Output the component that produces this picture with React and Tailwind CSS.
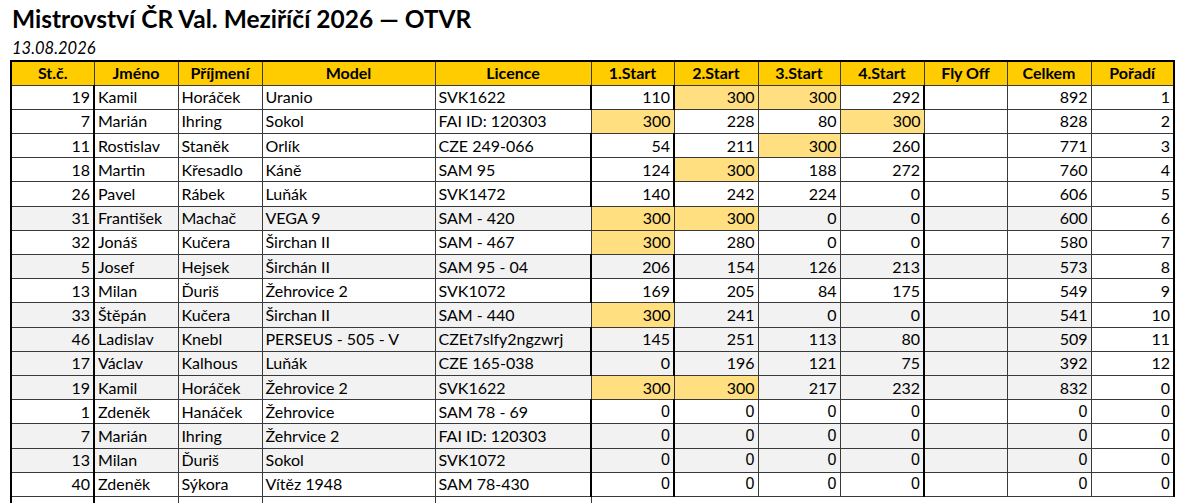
import React from 'react';

const cols = [
  { name: 'St.č.', w: 83 },
  { name: 'Jméno', w: 84 },
  { name: 'Příjmení', w: 84 },
  { name: 'Model', w: 173 },
  { name: 'Licence', w: 156 },
  { name: '1.Start', w: 83 },
  { name: '2.Start', w: 84 },
  { name: '3.Start', w: 82 },
  { name: '4.Start', w: 84 },
  { name: 'Fly Off', w: 83 },
  { name: 'Celkem', w: 84 },
  { name: 'Pořadí', w: 83 },
];

// [st, jmeno, prijmeni, model, licence, starts, celkem, poradi, gray, arial]
// starts: number, or [number, 1] when the cell is highlighted
const rows = [
  [19, 'Kamil', 'Horáček', 'Uranio', 'SVK1622', [110, [300, 1], [300, 1], 292], 892, 1, false],
  [7, 'Marián', 'Ihring', 'Sokol', 'FAI ID: 120303', [[300, 1], 228, 80, [300, 1]], 828, 2, false],
  [11, 'Rostislav', 'Staněk', 'Orlík', 'CZE 249-066', [54, 211, [300, 1], 260], 771, 3, false],
  [18, 'Martin', 'Křesadlo', 'Káně', 'SAM 95', [124, [300, 1], 188, 272], 760, 4, false],
  [26, 'Pavel', 'Rábek', 'Luňák', 'SVK1472', [140, 242, 224, 0], 606, 5, false],
  [31, 'František', 'Machač', 'VEGA 9', 'SAM - 420', [[300, 1], [300, 1], 0, 0], 600, 6, true],
  [32, 'Jonáš', 'Kučera', 'Širchan II', 'SAM - 467', [[300, 1], 280, 0, 0], 580, 7, false],
  [5, 'Josef', 'Hejsek', 'Širchán II', 'SAM 95 - 04', [206, 154, 126, 213], 573, 8, true],
  [13, 'Milan', 'Ďuriš', 'Žehrovice 2', 'SVK1072', [169, 205, 84, 175], 549, 9, false],
  [33, 'Štěpán', 'Kučera', 'Širchan II', 'SAM - 440', [[300, 1], 241, 0, 0], 541, 10, true],
  [46, 'Ladislav', 'Knebl', 'PERSEUS - 505 - V', 'CZEt7slfy2ngzwrj', [145, 251, 113, 80], 509, 11, true],
  [17, 'Václav', 'Kalhous', 'Luňák', 'CZE 165-038', [0, 196, 121, 75], 392, 12, true],
  [19, 'Kamil', 'Horáček', 'Žehrovice 2', 'SVK1622', [[300, 1], [300, 1], 217, 232], 832, 0, true],
  [1, 'Zdeněk', 'Hanáček', 'Žehrovice', 'SAM 78 - 69', [0, 0, 0, 0], 0, 0, false, true],
  [7, 'Marián', 'Ihring', 'Žehrvice 2', 'FAI ID: 120303', [0, 0, 0, 0], 0, 0, true, true],
  [13, 'Milan', 'Ďuriš', 'Sokol', 'SVK1072', [0, 0, 0, 0], 0, 0, true, true],
  [40, 'Zdeněk', 'Sýkora', 'Vítěz 1948', 'SAM 78-430', [0, 0, 0, 0], 0, 0, false, true],
];

const calibri = "font-['Lato','Open_Sans',sans-serif]";
const cell = 'border border-[#3a3a3a] h-[24.2px] px-[3px] text-[16px] leading-none whitespace-nowrap overflow-hidden';

function Num({ value, hi, arial, bg }) {
  return (
    <td
      className={`${cell} text-right ${hi ? 'bg-[#ffdf80]' : bg} ${
        arial ? "font-['Liberation_Sans',Arial,sans-serif] text-[14px]" : ''
      }`}
    >
      {value}
    </td>
  );
}

export default function App() {
  return (
    <div className={`${calibri} text-black bg-white min-h-screen pl-[10px] pt-[4px]`}>
      <h1 className="text-[24.5px] font-bold leading-[30px] pl-[2px]">Mistrovství ČR Val. Meziříčí 2026 — OTVR</h1>
      <div className="italic text-[16.5px] leading-[20px] pl-[2px] mt-[4px] mb-[2px]">13.08.2026</div>

      <table className="table-fixed border-collapse w-[1163px]">
        <colgroup>
          {cols.map((c) => (
            <col key={c.name} style={{ width: c.w }} />
          ))}
        </colgroup>
        <thead>
          <tr className="bg-[#ffcc00]">
            {cols.map((c, i) => (
              <th
                key={c.name}
                className={`${cell} font-bold text-center border-t-2 border-t-black ${
                  i === 0 ? 'border-l-2 border-l-black' : ''
                } ${i === 11 ? 'border-r-2 border-r-black' : ''}`}
              >
                {c.name}
              </th>
            ))}
          </tr>
        </thead>
        <tbody>
          {rows.map((r, idx) => {
            const [st, jm, pr, model, lic, starts, total, rank, gray, arial] = r;
            const bg = gray ? 'bg-[#f2f2f2]' : 'bg-white';
            return (
              <tr key={idx}>
                <Num value={st} bg={`${bg} border-l-2 border-l-black border-r-2 border-r-black`} />
                <td className={`${cell} ${bg}`}>{jm}</td>
                <td className={`${cell} ${bg}`}>{pr}</td>
                <td className={`${cell} ${bg}`}>{model}</td>
                <td className={`${cell} ${bg}`}>{lic}</td>
                {starts.map((s, i) => {
                  const v = Array.isArray(s) ? s[0] : s;
                  const hi = Array.isArray(s);
                  const edge =
                    i === 0
                      ? 'border-l-2 border-l-black border-r-2 border-r-black'
                      : i === 3
                      ? 'border-r-2 border-r-black'
                      : '';
                  return <Num key={i} value={v} hi={hi} arial={arial} bg={`${bg} ${edge}`} />;
                })}
                <td className={`${cell} ${bg}`}></td>
                <Num value={total} arial={arial} bg={bg} />
                <Num value={rank} arial={arial} bg="bg-white border-r-2 border-r-black" />
              </tr>
            );
          })}
          <tr>
            <td className="border-l-2 border-l-black border-r-2 border-r-black border-t border-t-[#3a3a3a] h-[24px]"></td>
            <td className="border-r border-r-[#3a3a3a] border-t border-t-[#3a3a3a]"></td>
            <td className="border-r border-r-[#3a3a3a] border-t border-t-[#3a3a3a]"></td>
            <td className="border-r border-r-[#3a3a3a] border-t border-t-[#3a3a3a]"></td>
            <td className="border-r border-r-[#3a3a3a] border-t border-t-[#3a3a3a]"></td>
            <td colSpan={7}></td>
          </tr>
        </tbody>
      </table>
    </div>
  );
}
